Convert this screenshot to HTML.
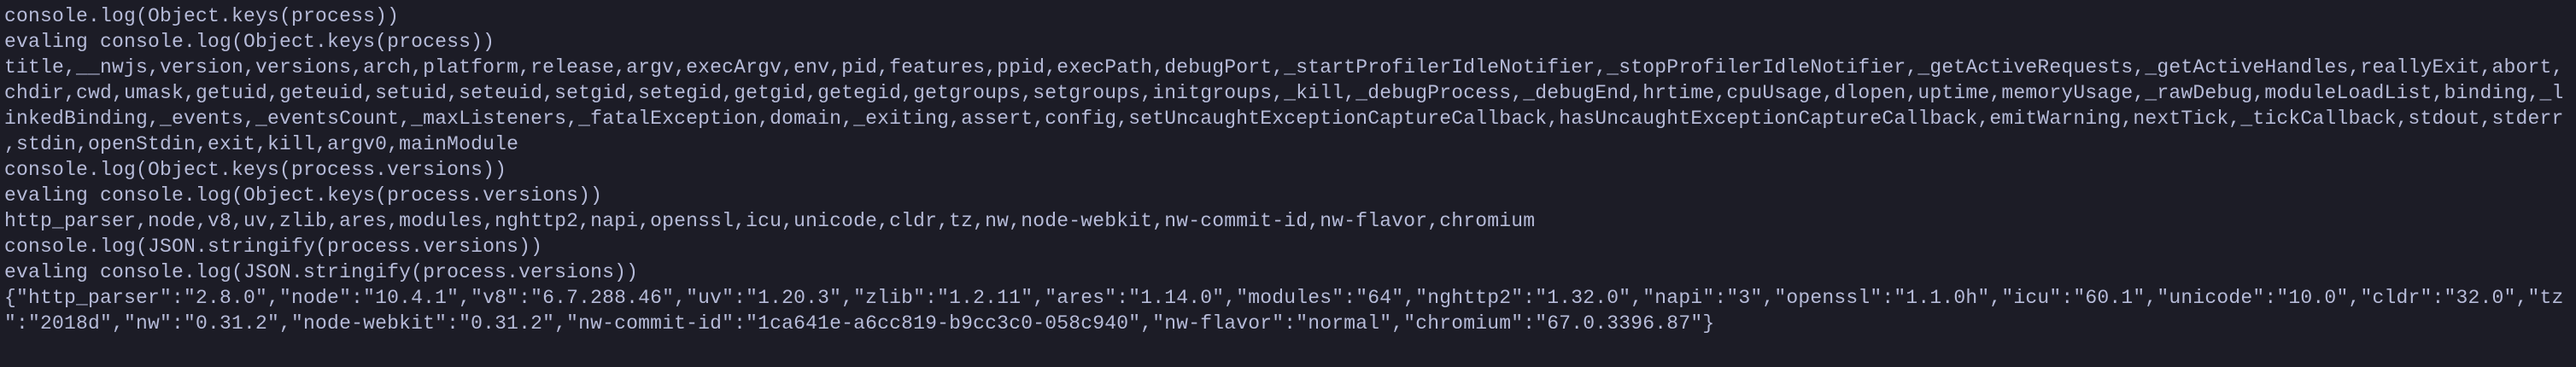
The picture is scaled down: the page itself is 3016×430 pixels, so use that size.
<!DOCTYPE html>
<html><head><meta charset="utf-8"><style>
html,body{margin:0;padding:0;background:#1c1c26;}
body{width:3016px;height:430px;overflow:hidden;}
pre{margin:0;position:absolute;left:5px;top:4px;font-family:"Liberation Mono",monospace;font-size:23px;letter-spacing:0.2px;line-height:30px;color:#b6bbd9;white-space:pre;}
</style></head><body>
<pre>console.log(Object.keys(process))
evaling console.log(Object.keys(process))
title,__nwjs,version,versions,arch,platform,release,argv,execArgv,env,pid,features,ppid,execPath,debugPort,_startProfilerIdleNotifier,_stopProfilerIdleNotifier,_getActiveRequests,_getActiveHandles,reallyExit,abort,
chdir,cwd,umask,getuid,geteuid,setuid,seteuid,setgid,setegid,getgid,getegid,getgroups,setgroups,initgroups,_kill,_debugProcess,_debugEnd,hrtime,cpuUsage,dlopen,uptime,memoryUsage,_rawDebug,moduleLoadList,binding,_l
inkedBinding,_events,_eventsCount,_maxListeners,_fatalException,domain,_exiting,assert,config,setUncaughtExceptionCaptureCallback,hasUncaughtExceptionCaptureCallback,emitWarning,nextTick,_tickCallback,stdout,stderr
,stdin,openStdin,exit,kill,argv0,mainModule
console.log(Object.keys(process.versions))
evaling console.log(Object.keys(process.versions))
http_parser,node,v8,uv,zlib,ares,modules,nghttp2,napi,openssl,icu,unicode,cldr,tz,nw,node-webkit,nw-commit-id,nw-flavor,chromium
console.log(JSON.stringify(process.versions))
evaling console.log(JSON.stringify(process.versions))
{"http_parser":"2.8.0","node":"10.4.1","v8":"6.7.288.46","uv":"1.20.3","zlib":"1.2.11","ares":"1.14.0","modules":"64","nghttp2":"1.32.0","napi":"3","openssl":"1.1.0h","icu":"60.1","unicode":"10.0","cldr":"32.0","tz
":"2018d","nw":"0.31.2","node-webkit":"0.31.2","nw-commit-id":"1ca641e-a6cc819-b9cc3c0-058c940","nw-flavor":"normal","chromium":"67.0.3396.87"}</pre>
</body></html>
